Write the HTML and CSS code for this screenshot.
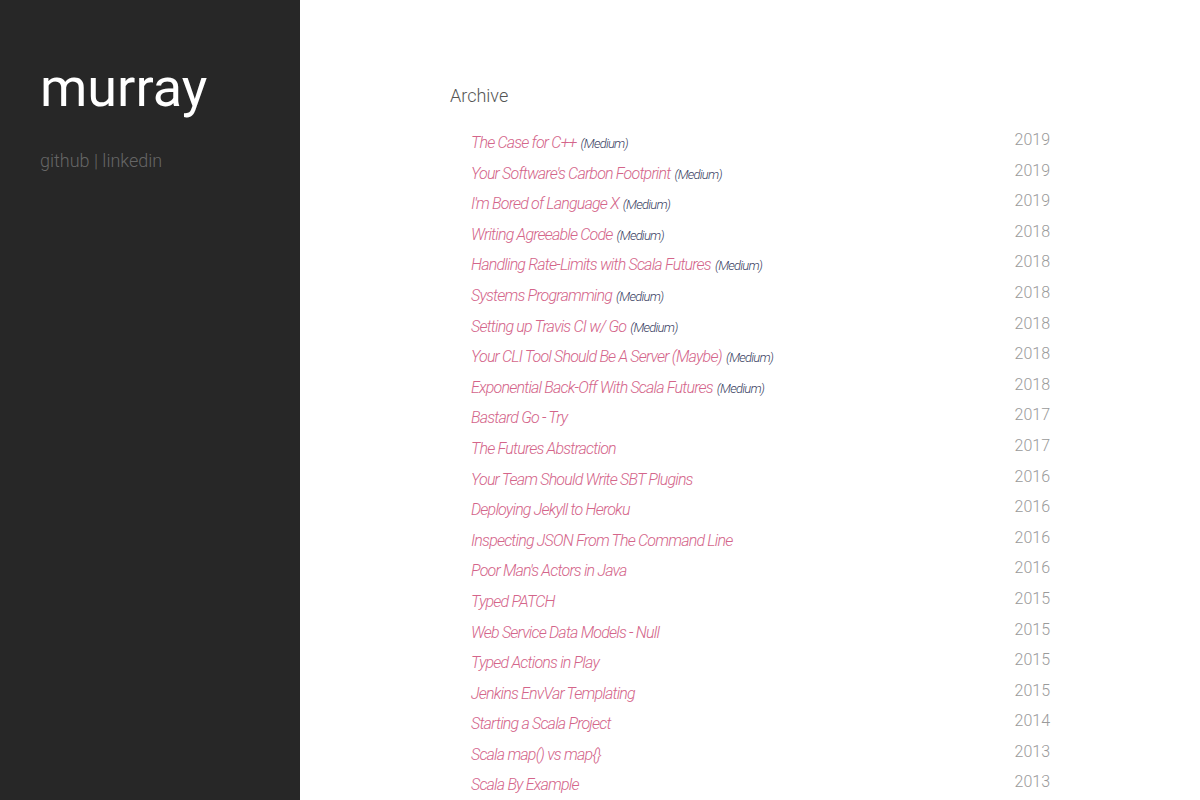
FILE: index.html
```html
<!DOCTYPE html>
<html lang="en">
<head>
    <meta charset="UTF-8">
    <meta name="viewport" content="width=device-width, initial-scale=1">
    <title>murray</title>
    <link rel="stylesheet" href="styles.css">
</head>
<body>

    <aside class="sidebar">
        <h1 class="navn">murray</h1>
        <p class="lenker"><a href="#">github</a> | <a href="#">linkedin</a></p>
    </aside>

    <main class="innhold">
        <h2 class="overskrift">Archive</h2>

        <ul class="poster">
            <li><a href="#">The Case for C++</a> <span class="kilde">(Medium)</span><span class="aar">2019</span></li>
            <li><a href="#">Your Software's Carbon Footprint</a> <span class="kilde">(Medium)</span><span class="aar">2019</span></li>
            <li><a href="#">I'm Bored of Language X</a> <span class="kilde">(Medium)</span><span class="aar">2019</span></li>
            <li><a href="#">Writing Agreeable Code</a> <span class="kilde">(Medium)</span><span class="aar">2018</span></li>
            <li><a href="#">Handling Rate-Limits with Scala Futures</a> <span class="kilde">(Medium)</span><span class="aar">2018</span></li>
            <li><a href="#">Systems Programming</a> <span class="kilde">(Medium)</span><span class="aar">2018</span></li>
            <li><a href="#">Setting up Travis CI w/ Go</a> <span class="kilde">(Medium)</span><span class="aar">2018</span></li>
            <li><a href="#">Your CLI Tool Should Be A Server (Maybe)</a> <span class="kilde">(Medium)</span><span class="aar">2018</span></li>
            <li><a href="#">Exponential Back-Off With Scala Futures</a> <span class="kilde">(Medium)</span><span class="aar">2018</span></li>
            <li><a href="#">Bastard Go - Try</a><span class="aar">2017</span></li>
            <li><a href="#">The Futures Abstraction</a><span class="aar">2017</span></li>
            <li><a href="#">Your Team Should Write SBT Plugins</a><span class="aar">2016</span></li>
            <li><a href="#">Deploying Jekyll to Heroku</a><span class="aar">2016</span></li>
            <li><a href="#">Inspecting JSON From The Command Line</a><span class="aar">2016</span></li>
            <li><a href="#">Poor Man's Actors in Java</a><span class="aar">2016</span></li>
            <li><a href="#">Typed PATCH</a><span class="aar">2015</span></li>
            <li><a href="#">Web Service Data Models - Null</a><span class="aar">2015</span></li>
            <li><a href="#">Typed Actions in Play</a><span class="aar">2015</span></li>
            <li><a href="#">Jenkins EnvVar Templating</a><span class="aar">2015</span></li>
            <li><a href="#">Starting a Scala Project</a><span class="aar">2014</span></li>
            <li><a href="#">Scala map() vs map{}</a><span class="aar">2013</span></li>
            <li><a href="#">Scala By Example</a><span class="aar">2013</span></li>
        </ul>
    </main>

</body>
</html>
```

FILE: styles.css
```css
* {
    margin: 0;
    padding: 0;
    box-sizing: border-box;
}
body {
    font-family: Roboto, "Liberation Sans", sans-serif;
    font-weight: 300;
    background-color: #ffffff;
    display: flex;
    min-height: 100vh;
    overflow: hidden;
}
a {
    text-decoration: none;
}
.sidebar {
    width: 300px;
    flex-shrink: 0;
    background-color: #272727;
    padding: 52px 40px 0 40px;
}
.navn {
    color: #ffffff;
    font-weight: 400;
    font-size: 54px;
    line-height: 72px;
}
.lenker {
    margin-top: 26px;
    color: #666666;
    font-size: 18px;
}
.lenker a {
    color: #666666;
}
.innhold {
    flex: 1;
    display: flex;
    flex-direction: column;
    align-items: center;
    padding-top: 84px;
}
.overskrift {
    width: 600px;
    font-weight: 300;
    font-size: 18px;
    color: #555555;
    line-height: 24px;
}
.poster {
    list-style: none;
    width: 600px;
    margin-top: 22px;
    padding-left: 21px;
}
.poster li {
    display: flex;
    align-items: baseline;
    height: 30.6px;
}
.poster li a {
    font-style: italic;
    color: #d4658a;
    font-size: 16px;
    letter-spacing: -0.05em;
    position: relative;
    top: 3px;
}
.kilde {
    font-style: italic;
    font-size: 13px;
    color: #3b3f63;
    letter-spacing: -0.06em;
    margin-left: 4px;
    position: relative;
    top: 3px;
}
.aar {
    margin-left: auto;
    color: #9a9a9a;
    font-size: 16px;
}
```
